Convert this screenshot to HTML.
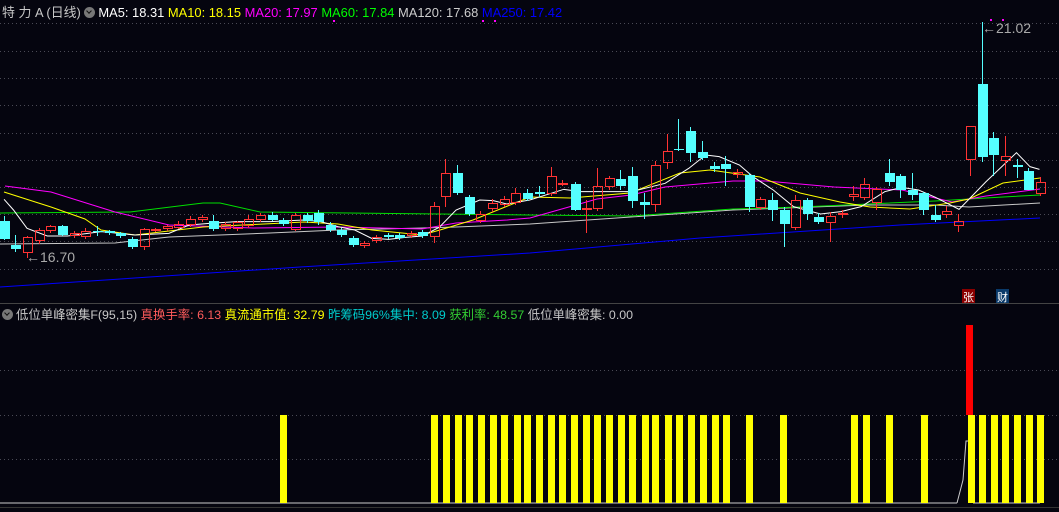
<!DOCTYPE html>
<html><head><meta charset="utf-8"><style>
html,body{margin:0;padding:0;background:#05050f;width:1059px;height:512px;overflow:hidden}
svg{position:absolute;left:0;top:0}
.t{position:absolute;font-family:"Liberation Sans","Noto Sans CJK SC",sans-serif;font-size:13px;white-space:nowrap}
.ic{display:inline-block;width:11px;height:11px;border-radius:50%;background:#777;vertical-align:-1px;margin-right:3px;position:relative}
.ic:after{content:"";position:absolute;left:3px;top:2px;width:3px;height:3px;border-right:1.5px solid #111;border-bottom:1.5px solid #111;transform:rotate(45deg)}
</style></head><body>
<svg id="s" width="1059" height="512" xmlns="http://www.w3.org/2000/svg"></svg>
<div class="t" style="left:2px;top:2px;color:#c8c8c8;font-size:12.9px">特 力 A (日线) <span class="ic"></span><span style="color:#fff">MA5: 18.31</span> <span style="color:#ff0">MA10: 18.15</span> <span style="color:#f0f">MA20: 17.97</span> <span style="color:#0f0">MA60: 17.84</span> <span style="color:#ccc">MA120: 17.68</span> <span style="color:#00f">MA250: 17.42</span></div>
<div class="t" style="left:2px;top:305px;color:#c8c8c8;font-size:12.4px"><span class="ic"></span>低位单峰密集F(95,15) <span style="color:#ff5c5c">真换手率: 6.13</span> <span style="color:#ff0">真流通市值: 32.79</span> <span style="color:#0cc">昨筹码96%集中: 8.09</span> <span style="color:#3c3">获利率: 48.57</span> 低位单峰密集: 0.00</div>
<div class="t" style="left:26px;top:249px;color:#aaa;font-size:14px">←16.70</div>
<div class="t" style="left:982px;top:20px;color:#aaa;font-size:14px">←21.02</div>
<div class="t" style="left:962px;top:289px;width:13px;height:14px;background:#8b0000;color:#fff;font-size:11px;text-align:center">张</div>
<div class="t" style="left:996px;top:289px;width:13px;height:14px;background:#0a3a6a;color:#fff;font-size:11px;text-align:center">财</div>
<script>
var s=document.getElementById('s'),h='';
function L(x1,y1,x2,y2,c,d){h+='<line x1="'+x1+'" y1="'+y1+'" x2="'+x2+'" y2="'+y2+'" stroke="'+c+'" stroke-width="1"'+(d?' stroke-dasharray="1,3"':'')+'/>';}
[23,51,78,105,133,160,187,214,241,269].forEach(function(y){L(0,y+.5,1059,y+.5,'#4a4a55',1)});
[370,415,459].forEach(function(y){L(0,y+.5,1059,y+.5,'#4a4a55',1)});
L(0,303.5,1059,303.5,'#444');
function P(pts,c){h+='<polyline fill="none" stroke="'+c+'" stroke-width="1" points="'+pts.map(function(p){return p.join(',')}).join(' ')+'"/>';}
function Z4(a){return a.map(function(p){return [p[0]/2.96,p[1]/3+150]})}
function Z5(a){return a.map(function(p){return [p[0]/2.96+530,p[1]/3+110]})}
P([[0,287],[300,267],[530,253],[700,238],[900,225],[1040,218]],'#0000ff');
P([[0,244],[115,243],[169,237],[270,233],[338,230],[422,228],[456,227],[530,224],[631,217],[733,210],[868,205],[935,205],[969,207],[1040,203]],'#c8c8c8');
P([[0,213],[130,212],[203,203],[220,203],[260,212],[530,215],[631,216],[733,209],[800,207],[868,204],[935,201],[969,199],[1003,197],[1040,195]],'#00e000');
P([[5,186],[51,192],[115,212],[169,225],[253,228],[338,227],[422,229],[456,223],[507,220],[530,218],[597,199],[631,195],[665,187],[733,181],[766,181],[834,187],[902,190],[952,202],[986,196],[1040,189]],'#ff00ff');
P([[4,192],[51,207],[85,219],[101,230],[135,235],[203,227],[304,222],[338,224],[372,230],[422,235],[440,230],[473,220],[530,197],[570,198],[630,193],[680,173],[710,170],[760,177],[800,193],[840,202],[870,207],[910,209],[950,203],[969,199],[1003,183],[1040,178]],'#ffff00');
P(Z4([[12,148],[40,180],[80,235],[140,258],[200,258],[300,245],[400,255],[500,250],[560,225],[620,220],[700,215],[800,215],[900,210],[950,215],[1000,230],[1050,240],[1100,265],[1150,268],[1200,262],[1250,258],[1300,232],[1350,180],[1420,150],[1460,152],[1500,162],[1568,150]]).concat(Z5([[100,238],[150,245],[300,245],[400,220],[470,175],[520,135],[560,140],[620,165],[660,200],[720,240],[780,290],[860,312],[920,305],[980,290],[1050,245],[1100,232],[1150,240],[1200,262],[1270,298],[1350,215],[1440,128],[1480,170],[1508,178]])),'#fff');
var C=[[4,221,239,216,240,0],[15,245,249,235,252,0],[27,237,253,236,258,1],[39,230,241,228,244,1],[50,226,231,225,233,1],[62,226,235,225,236,0],[74,233,236,231,238,1],[85,231,237,228,239,1],[97,231,232,226,236,0],[109,231,233,230,235,0],[120,233,236,232,238,0],[132,239,247,237,249,0],[144,229,247,228,250,1],[155,229,230,228,232,1],[167,226,229,225,231,1],[178,224,228,221,229,1],[190,219,225,216,227,1],[202,217,220,215,222,1],[213,221,229,215,231,0],[225,224,229,222,231,1],[237,222,229,221,231,1],[248,219,226,215,228,1],[260,215,220,213,222,1],[272,215,220,212,221,0],[283,220,224,218,226,0],[295,215,230,213,231,1],[307,215,221,213,223,0],[318,213,222,210,225,0],[330,225,230,222,232,0],[341,230,235,228,237,0],[353,238,245,236,247,0],[364,243,246,241,248,1],[376,237,241,235,243,1],[388,235,237,233,239,0],[399,235,238,233,240,0],[411,233,236,231,238,1],[422,232,236,230,238,0],[434,206,237,202,243,1],[445,173,197,159,207,1],[457,173,193,165,195,0],[469,197,214,195,216,0],[480,214,221,211,223,1],[492,203,209,199,212,1],[504,199,205,196,207,1],[515,193,203,188,205,1],[527,193,199,189,201,0],[539,192,194,186,197,0],[551,176,194,167,196,1],[562,183,184,180,186,1],[575,184,210,182,211,0],[586,208,210,200,233,1],[597,186,209,168,211,1],[609,178,187,176,190,1],[620,179,186,170,190,0],[632,176,201,167,208,0],[644,202,205,193,219,0],[655,165,205,161,212,1],[667,151,163,134,169,1],[678,149,150,119,151,0],[690,131,153,127,162,0],[702,152,158,141,160,0],[714,166,169,162,172,0],[725,164,169,156,186,0],[737,172,175,169,178,1],[749,175,207,173,212,0],[760,199,208,197,210,1],[772,200,210,193,221,0],[784,210,224,207,247,0],[795,200,228,195,230,1],[807,200,214,198,220,0],[818,217,222,213,224,0],[830,216,223,212,242,1],[842,213,215,210,218,1],[853,194,197,186,201,1],[864,184,198,178,200,1],[876,189,203,187,210,1],[889,173,182,159,186,0],[900,176,190,174,198,0],[912,190,195,173,200,0],[923,193,210,192,215,0],[935,215,220,205,222,0],[946,211,215,206,218,1],[958,221,226,214,232,1],[970,126,160,126,176,1],[982,84,157,22,162,0],[993,138,155,132,176,0],[1005,156,161,136,176,1],[1017,165,167,159,178,0],[1028,171,190,168,190,0],[1040,182,194,177,196,1]];
C.forEach(function(c){var x=c[0],col=c[5]?'#ff3333':'#55ffff';
L(x+.5,c[3],x+.5,c[1],col);L(x+.5,c[2],x+.5,c[4],col);
var ht=Math.max(1,c[2]-c[1]);
if(c[5])h+='<rect x="'+(x-4)+'.5" y="'+c[1]+'.5" width="9" height="'+(ht-1<1?1:ht-1)+'" fill="none" stroke="'+col+'"/>';
else h+='<rect x="'+(x-4)+'" y="'+c[1]+'" width="10" height="'+ht+'" fill="'+col+'"/>';});
[[333,20],[482,20],[494,20],[990,19],[1002,19]].forEach(function(p){h+='<rect x="'+p[0]+'" y="'+p[1]+'" width="2" height="2" fill="#f0f"/>'});
L(0,503,957,503,'#ccc');
h+='<polyline fill="none" stroke="#ccc" points="957,503 963,480 966,441 970,441 973,480"/>';
L(973,503,1040,503,'#ccc');
L(0,507.5,1059,507.5,'#333');
[280,431,443,455,466,478,490,501,514,524,536,548,559,571,583,594,606,618,629,642,652,665,676,688,700,712,723,746,780,851,863,886,921,968,979,991,1002,1014,1026,1037].forEach(function(x){h+='<rect x="'+x+'" y="415" width="7" height="88" fill="#ffff00"/>'});
h+='<rect x="966" y="325" width="7" height="90" fill="#ff0000"/>';
s.innerHTML=h;
</script>
</body></html>
